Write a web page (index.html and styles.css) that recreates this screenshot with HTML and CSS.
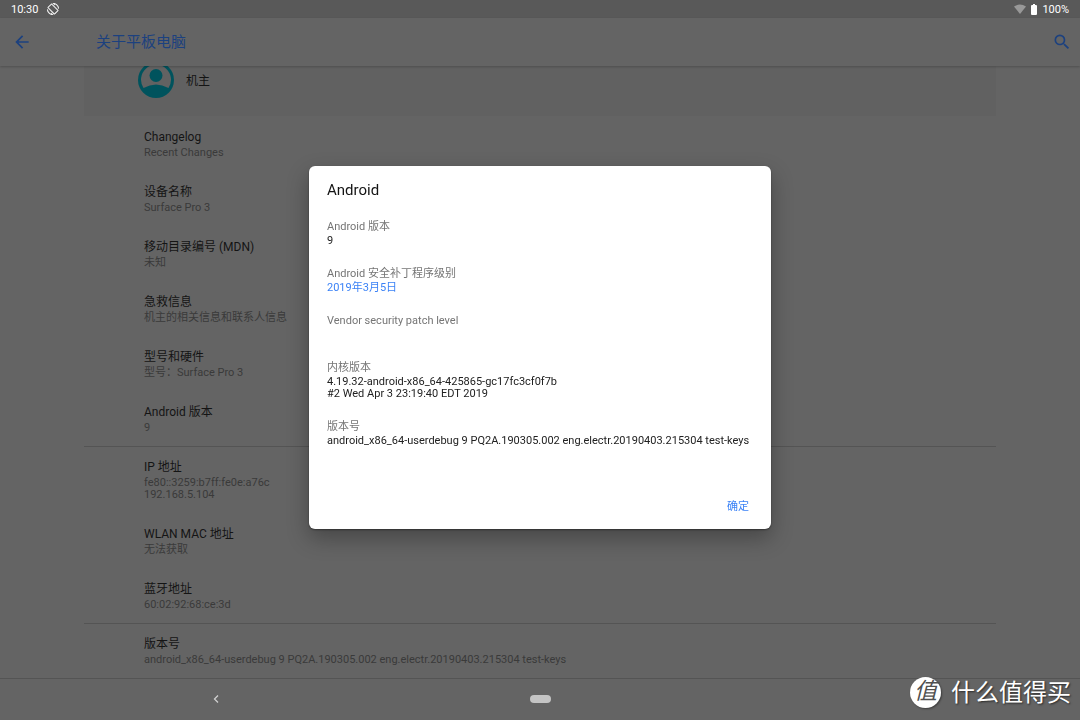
FILE: index.html
```html
<!DOCTYPE html>
<html lang="zh-CN">
<head>
<meta charset="utf-8">
<meta name="viewport" content="width=device-width, initial-scale=1">
<title>关于平板电脑</title>
<link rel="stylesheet" href="styles.css">
</head>
<body>
<div class="screen">
  <header class="status">
    <span>10:30</span>
    <svg class="rotate" viewBox="0 0 24 24" aria-hidden="true"><path fill="#fff" stroke="#fff" stroke-width=".6" d="M16.480 2.520c3.270 1.550 5.610 4.720 5.970 8.480h1.500C23.440 4.840 18.290 0 12 0l-.66.03 3.810 3.810 1.330-1.320zm-6.250-.77c-.59-.59-1.540-.59-2.120 0L1.750 8.110c-.59.59-.59 1.540 0 2.120l12.020 12.020c.59.59 1.540.59 2.120 0l6.360-6.360c.59-.59.59-1.540 0-2.120L10.230 1.750zm4.600 19.440L2.810 9.170l6.360-6.360 12.020 12.020-6.360 6.360zm-7.310.29C4.250 19.940 1.910 16.760 1.550 13H.05C.56 19.160 5.710 24 12 24l.66-.03-3.810-3.810-1.330 1.320z"/></svg>
    <span class="spacer"></span>
    <svg class="wifi" viewBox="0 0 12 10" aria-hidden="true"><path fill="#989898" d="M0 2.500Q6-1.500 12 2.500L6 10Z"/></svg>
    <svg class="battery" viewBox="0 0 6 11" aria-hidden="true"><path fill="#fff" d="M2 0h2v1h1q1 0 1 1v8q0 1-1 1H1q-1 0-1-1V2q0-1 1-1h1Z"/></svg>
    <span>100%</span>
  </header>
  <div class="appbar">
    <button class="icon-btn" aria-label="返回"><svg viewBox="0 0 24 24"><path fill="#1c417f" d="M20 11H7.830l5.590-5.590L12 4l-8 8 8 8 1.410-1.410L7.830 13H20v-2z"/></svg></button>
    <h1 class="page-title">关于平板电脑</h1>
    <button class="icon-btn" aria-label="搜索"><svg viewBox="0 0 24 24"><path fill="#1c417f" d="M15.500 14h-.79l-.28-.27A6.470 6.470 0 0 0 16 9.500 6.500 6.500 0 1 0 9.500 16c1.610 0 3.090-.59 4.230-1.570l.27.28v.79l5 4.990L20.490 19l-4.990-5zm-6 0C7.010 14 5 11.990 5 9.500S7.010 5 9.500 5 14 7.010 14 9.500 11.990 14 9.500 14z"/></svg></button>
  </div>
  <main class="settings">
    <div class="owner">
      <svg class="avatar" viewBox="0 0 36 36" aria-hidden="true"><circle cx="18" cy="18" r="18" fill="#00535d"/><path fill="#626262" d="M5.500 26A15 15 0 1 1 30.500 26Q18 19 5.500 26Z"/><circle cx="18" cy="13.500" r="6.500" fill="#00535d"/></svg>
      <span>机主</span>
    </div>
    <section class="group">
      <div class="item"><h2>Changelog</h2><p>Recent Changes</p></div>
      <div class="item"><h2>设备名称</h2><p>Surface Pro 3</p></div>
      <div class="item"><h2>移动目录编号 (MDN)</h2><p>未知</p></div>
      <div class="item"><h2>急救信息</h2><p>机主的相关信息和联系人信息</p></div>
      <div class="item"><h2>型号和硬件</h2><p>型号：Surface Pro 3</p></div>
      <div class="item"><h2>Android 版本</h2><p>9</p></div>
    </section>
    <section class="group ruled">
      <div class="item"><h2>IP 地址</h2><p>fe80::3259:b7ff:fe0e:a76c<br>192.168.5.104</p></div>
      <div class="item"><h2>WLAN MAC 地址</h2><p>无法获取</p></div>
      <div class="item"><h2>蓝牙地址</h2><p>60:02:92:68:ce:3d</p></div>
    </section>
    <section class="group ruled">
      <div class="item"><h2>版本号</h2><p>android_x86_64-userdebug 9 PQ2A.190305.002 eng.electr.20190403.215304 test-keys</p></div>
    </section>
  </main>
  <nav class="navbar">
    <button class="back" aria-label="返回"><svg viewBox="0 0 6 8"><path d="M5 .5 1.500 4 5 7.500" fill="none" stroke="#d0d0d0" stroke-width="1.300"/></svg></button>
    <button class="home" aria-label="主屏幕"></button>
    <div class="brand">
      <span class="brand-mark">值</span><span>什么值得买</span>
    </div>
  </nav>
</div>
<div class="overlay">
  <div class="dialog" role="dialog" aria-labelledby="dialog-title">
    <h2 class="dialog-title" id="dialog-title">Android</h2>
    <dl class="facts">
      <div><dt>Android 版本</dt><dd>9</dd></div>
      <div><dt>Android 安全补丁程序级别</dt><dd><a href="#">2019年3月5日</a></dd></div>
      <div><dt>Vendor security patch level</dt><dd></dd></div>
      <div><dt>内核版本</dt><dd>4.19.32-android-x86_64-425865-gc17fc3cf0f7b<br>#2 Wed Apr 3 23:19:40 EDT 2019</dd></div>
      <div><dt>版本号</dt><dd>android_x86_64-userdebug 9 PQ2A.190305.002 eng.electr.20190403.215304 test-keys</dd></div>
    </dl>
    <div class="actions"><button class="confirm">确定</button></div>
  </div>
</div>
</body>
</html>
```
FILE: styles.css
```css
* { box-sizing: border-box; margin: 0; padding: 0; }
body {
  background: #646464;
  color: #141414;
  font-family: Roboto, "Noto Sans CJK SC", sans-serif;
  font-size: 12px;
}
button { border: 0; background: none; font: inherit; cursor: pointer; }
svg { display: block; }
h1, h2 { font-weight: 400; }

.screen { display: flex; flex-direction: column; height: 100vh; overflow: hidden; }

.status {
  display: flex;
  align-items: center;
  flex: none;
  height: 18px;
  padding: 0 11px;
  background: #595959;
  color: #fff;
  font-size: 11px;
}
.rotate { width: 12px; height: 12px; margin-left: 9px; }
.spacer { flex: 1; }
.wifi { width: 12px; height: 10px; margin-right: 5px; }
.battery { width: 6px; height: 11px; margin-right: 5px; }

.appbar {
  display: flex;
  align-items: center;
  flex: none;
  height: 48px;
  padding: 0 8px 0 12px;
  box-shadow: 0 1px 2px rgba(0, 0, 0, .2);
  z-index: 1;
}
.icon-btn svg { width: 20px; height: 20px; }
.page-title {
  flex: 1;
  margin-left: 64px;
  color: #1c417f;
  font-size: 15px;
  line-height: 20px;
}

.settings { flex: 1; min-height: 0; overflow: hidden; padding: 0 84px; }
.owner {
  display: flex;
  align-items: flex-start;
  gap: 12px;
  height: 50px;
  padding-left: 54px;
  background: #616161;
  line-height: 30px;
}
.avatar { width: 36px; height: 36px; margin-top: -4px; }
.ruled { border-top: 1px solid #545454; }
.item { padding: 14px 60px 12px; }
.ruled .item:first-child { padding-top: 13px; }
.item h2 { font-size: 12px; line-height: 15px; }
.item p { margin-top: 2px; color: #3a3a3a; font-size: 11px; line-height: 12px; }

.navbar {
  display: grid;
  grid-template-columns: 1fr auto 1fr;
  align-items: center;
  flex: none;
  height: 42px;
  padding-bottom: 2px;
  border-top: 1px solid #545454;
  background: #646464;
}
.back { justify-self: center; padding: 4px; margin-right: 97px; }
.back svg { width: 6px; height: 8px; }
.home { width: 21px; height: 8px; border-radius: 4px; background: #c4c4c4; }
.brand {
  display: flex;
  align-items: center;
  justify-self: end;
  gap: 10px;
  margin: -12px 9px 0 0;
  color: #fff;
  font-size: 24px;
  line-height: 32px;
  text-shadow: 1px 1px 2px rgba(0, 0, 0, .6);
  white-space: nowrap;
}
.brand-mark {
  width: 31px;
  height: 31px;
  border-radius: 50%;
  background: #fff;
  color: #505050;
  font-size: 23px;
  font-style: italic;
  line-height: 30px;
  text-align: center;
  text-shadow: none;
  box-shadow: 1px 1px 2px rgba(0, 0, 0, .4);
}

.overlay {
  position: fixed;
  inset: 0;
  z-index: 2;
  display: flex;
  align-items: center;
  justify-content: center;
  padding-bottom: 25px;
}
.dialog {
  width: 462px;
  max-width: 90%;
  padding: 14px 18px 12px;
  border-radius: 6px;
  background: #fff;
  box-shadow: 0 9px 22px rgba(0, 0, 0, .3), 0 1px 2px rgba(0, 0, 0, .4);
}
.dialog-title { font-size: 15px; line-height: 20px; }
.facts { padding-top: 20px; font-size: 11px; line-height: 12px; }
.facts div { padding-bottom: 20px; }
.facts dt { height: 15px; color: #757575; line-height: 14px; }
.facts dd { min-height: 12px; color: #212121; white-space: nowrap; }
.facts a { color: #3b82f6; text-decoration: none; }
.actions { display: flex; justify-content: flex-end; padding-top: 29px; }
.confirm { padding: 0 4px; color: #3b82f6; font-size: 11px; line-height: 21px; }
```
